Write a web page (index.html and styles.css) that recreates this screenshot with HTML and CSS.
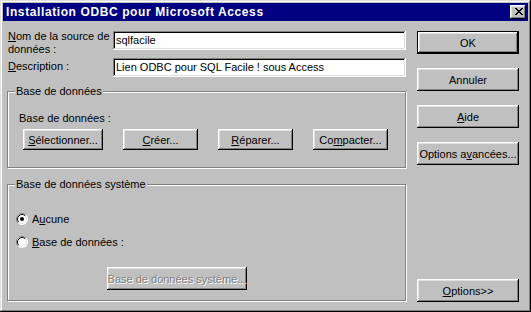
FILE: index.html
```html
<!DOCTYPE html>
<html lang="fr">
<head>
  <meta charset="UTF-8">
  <title>Installation ODBC pour Microsoft Access</title>
  <link rel="stylesheet" href="styles.css">
</head>
<body>
  <div class="window">
    <div class="titlebar">
      <span class="title">Installation ODBC pour Microsoft Access</span>
      <button class="close" aria-label="Fermer">
        <svg width="8" height="7" viewBox="0 0 8 7" shape-rendering="crispEdges">
          <path d="M0 0h2v1H0zM6 0h2v1H6zM1 1h2v1H1zM5 1h2v1H5zM2 2h4v1H2zM3 3h2v1H3zM2 4h4v1H2zM1 5h2v1H1zM5 5h2v1H5zM0 6h2v1H0zM6 6h2v1H6z" fill="#000"/>
        </svg>
      </button>
    </div>

    <div class="content">
      <div class="left">
        <div class="field">
          <label class="field-label"><u>N</u>om de la source de<br>données :</label>
          <div class="input">sqlfacile</div>
        </div>
        <div class="field">
          <label class="field-label field-label-single"><u>D</u>escription :</label>
          <div class="input">Lien ODBC pour SQL Facile ! sous Access</div>
        </div>

        <div class="group group-db">
          <div class="group-title">Base de données</div>
          <div class="group-label">Base de données :</div>
          <div class="btn-row">
            <button class="btn btn-wide"><u>S</u>électionner...</button>
            <button class="btn"><u>C</u>réer...</button>
            <button class="btn"><u>R</u>éparer...</button>
            <button class="btn">Co<u>m</u>pacter...</button>
          </div>
        </div>

        <div class="group group-sys">
          <div class="group-title">Base de données système</div>
          <div class="radio radio-first">
            <svg class="radio-icon" width="12" height="12" viewBox="0 0 12 12">
              <circle cx="6" cy="6" r="5.5" fill="#fff"/>
              <path d="M2.11 9.89A5.5 5.5 0 0 1 9.89 2.11" fill="none" stroke="#808080"/>
              <path d="M9.89 2.11A5.5 5.5 0 0 1 2.11 9.89" fill="none" stroke="#fff"/>
              <path d="M2.82 9.18A4.5 4.5 0 0 1 9.18 2.82" fill="none" stroke="#000"/>
              <path d="M9.18 2.82A4.5 4.5 0 0 1 2.82 9.18" fill="none" stroke="#dfdfdf"/>
              <circle cx="6" cy="6" r="2" fill="#000"/>
            </svg>
            <span>A<u>u</u>cune</span>
          </div>
          <div class="radio">
            <svg class="radio-icon" width="12" height="12" viewBox="0 0 12 12">
              <circle cx="6" cy="6" r="5.5" fill="#fff"/>
              <path d="M2.11 9.89A5.5 5.5 0 0 1 9.89 2.11" fill="none" stroke="#808080"/>
              <path d="M9.89 2.11A5.5 5.5 0 0 1 2.11 9.89" fill="none" stroke="#fff"/>
              <path d="M2.82 9.18A4.5 4.5 0 0 1 9.18 2.82" fill="none" stroke="#000"/>
              <path d="M9.18 2.82A4.5 4.5 0 0 1 2.82 9.18" fill="none" stroke="#dfdfdf"/>
            </svg>
            <span><u>B</u>ase de données :</span>
          </div>
          <button class="btn btn-disabled" disabled>Base de données système...</button>
        </div>
      </div>

      <div class="right">
        <button class="btn btn-side btn-default">OK</button>
        <button class="btn btn-side">Annuler</button>
        <button class="btn btn-side"><u>A</u>ide</button>
        <button class="btn btn-side">Options a<u>v</u>ancées...</button>
        <button class="btn btn-side btn-bottom"><u>O</u>ptions&gt;&gt;</button>
      </div>
    </div>
  </div>
</body>
</html>
```

FILE: styles.css
```css
body {
  margin: 0;
  padding: 0;
  background-color: #c0c0c0;
  color: #000;
  font-family: "Liberation Sans", Arial, sans-serif;
  font-size: 11px;
}

.window {
  width: 531px;
  height: 312px;
  box-sizing: border-box;
  padding: 3px;
  display: flex;
  flex-direction: column;
  box-shadow: inset -1px -1px #000, inset 1px 1px #dfdfdf, inset -2px -2px #808080, inset 2px 2px #fff;
}

.titlebar {
  height: 18px;
  background-color: #000080;
  color: #fff;
  display: flex;
  align-items: center;
  justify-content: space-between;
  padding: 0 2px 0 3px;
}

.title {
  font-size: 12px;
  font-weight: bold;
  letter-spacing: 0.6px;
  line-height: 18px;
}

.close {
  width: 16px;
  height: 14px;
  padding: 0 0 1px 1px;
  border: 0;
  background-color: #c0c0c0;
  display: flex;
  align-items: center;
  justify-content: center;
  box-shadow: inset -1px -1px #000, inset 1px 1px #fff, inset -2px -2px #808080, inset 2px 2px #dfdfdf;
}

.content {
  flex: 1;
  display: flex;
  padding: 10px 9px 7px 4px;
}

.left {
  width: 399px;
}

.field {
  display: flex;
  align-items: flex-start;
  height: 19px;
}

.field + .field {
  margin-top: 8px;
}

.field-label {
  width: 105px;
  padding-left: 1px;
  margin-top: -1px;
  line-height: 13px;
}

.field-label-single {
  margin-top: 2px;
}

.input {
  width: 293px;
  height: 19px;
  box-sizing: border-box;
  padding: 0 3px;
  line-height: 18px;
  background-color: #fff;
  box-shadow: inset -1px -1px #fff, inset 1px 1px #808080, inset -2px -2px #dfdfdf, inset 2px 2px #000;
}

.group {
  box-sizing: border-box;
  width: 399px;
  border: 1px solid #808080;
  box-shadow: 1px 1px 0 #fff, inset 1px 1px 0 #fff;
}

.group-db {
  margin-top: 14px;
  height: 77px;
}

.group-sys {
  margin-top: 16px;
  height: 117px;
}

.group-title {
  width: fit-content;
  margin: -7px 0 0 7px;
  padding: 0 1px;
  line-height: 12px;
  background-color: #c0c0c0;
}

.group-label {
  margin: 15px 0 0 11px;
  line-height: 12px;
}

.btn {
  height: 23px;
  padding: 0;
  border: 0;
  background-color: #c0c0c0;
  color: #000;
  font-family: inherit;
  font-size: 11px;
  line-height: 12px;
  box-shadow: inset -1px -1px #000, inset 1px 1px #fff, inset -2px -2px #808080, inset 2px 2px #dfdfdf;
}

.btn-row {
  display: flex;
  gap: 20px;
  margin: 5px 0 0 15px;
}

.btn-row .btn {
  width: 75px;
  height: 21px;
}

.btn-row .btn-wide {
  width: 80px;
}

.radio {
  display: flex;
  align-items: center;
  gap: 4px;
  margin: 11px 0 0 8px;
  line-height: 12px;
}

.radio-first {
  margin-top: 23px;
}

.btn-disabled {
  display: block;
  width: 140px;
  margin: 19px 0 0 99px;
  color: #808080;
  text-shadow: 1px 1px 0 #fff;
}

.right {
  width: 102px;
  margin-left: 11px;
  display: flex;
  flex-direction: column;
  gap: 14px;
}

.btn-side {
  width: 102px;
}

.btn-default {
  box-shadow: inset 0 0 0 1px #000, inset -2px -2px #000, inset 2px 2px #fff, inset -3px -3px #808080, inset 3px 3px #dfdfdf;
}

.btn-bottom {
  margin-top: auto;
}
```
